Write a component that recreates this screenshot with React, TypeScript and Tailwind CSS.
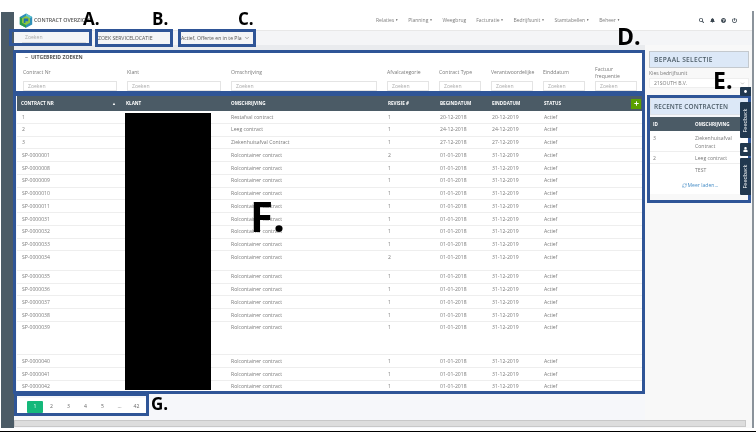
import React from "react";
import { ChevronDown, RefreshCw } from "lucide-react";
import { FaSearch, FaBell, FaQuestionCircle, FaPowerOff, FaPlus, FaMinus, FaUser, FaCircle } from "react-icons/fa";

type Row = { id: string; desc: string; rev: string; b: string; e: string; h?: string };
const sp = (id: string, rev = "1", h?: string): Row => ({ id: `SP-00000${id}`, desc: "Rolcontainer contract", rev, b: "01-01-2018", e: "31-12-2019", h });
const rows: Row[] = [
  { id: "1", desc: "Restafval contract", rev: "1", b: "20-12-2018", e: "20-12-2019" },
  { id: "2", desc: "Leeg contract", rev: "1", b: "24-12-2018", e: "24-12-2019" },
  { id: "3", desc: "Ziekenhuisafval Contract", rev: "1", b: "27-12-2018", e: "27-12-2019" },
  sp("01", "2"), sp("08"), sp("09"), sp("10"), sp("11"), sp("31"), sp("32"), sp("33"),
  sp("34", "2", "h-[19.5px]"), sp("35"), sp("36"), sp("37"), sp("38"),
  sp("39", "1", "h-[33.5px]"), sp("40"), sp("41"), sp("42"),
];
const filters = ["Contract Nr", "Klant", "Omschrijving", "Afvalcategorie", "Contract Type", "Verantwoordelijke", "Einddatum", "Factuur frequentie"];
const nav = [
  ["Relaties", true], ["Planning", true], ["Weegbrug", false], ["Facturatie", true],
  ["Bedrijfsunit", true], ["Stamtabellen", true], ["Beheer", true],
] as const;
const pages = ["2", "3", "4", "5", "...", "42"];
const cols = "grid grid-cols-[105px_105px_157px_52px_52px_52px_1fr]";

function Logo() {
  return (
    <svg viewBox="0 0 14 15" className="w-[14px] h-[15px]">
      <path d="M7 0.5 13.2 4v7.4L7 14.8.8 11.4V4Z" fill="#2f8fb8" />
      <path d="M7 .5 13.2 4 7 7.6Z" fill="#5cc3cf" />
      <path d="M.8 4 7 7.6v7.2L.8 11.4Z" fill="#2e9b4b" />
      <path d="M3 5.2 7 3l4 2.2v4.6L7 12 3 9.8Z" fill="#8dc63f" />
      <path d="M4.8 5.6h4.4v2.6H6.4V10H4.8Z" fill="#1f6fb0" />
    </svg>
  );
}

function Marker({ className }: { className: string }) {
  return <div className={`absolute border-[3px] border-[#2f5597] pointer-events-none ${className}`} />;
}
function Letter({ className, children }: { className: string; children: React.ReactNode }) {
  return <div className={`absolute font-bold text-black leading-none ${className}`}>{children}</div>;
}
function Tab({ className, children }: { className: string; children: React.ReactNode }) {
  return (
    <div className={`absolute left-[740px] w-[11px] bg-[#21384f] rounded-l-[1px] flex items-center justify-center text-white ${className}`}>
      {children}
    </div>
  );
}
function Vertical() {
  return <span className="-rotate-90 text-[5.4px] whitespace-nowrap">Feedback</span>;
}

export default function App() {
  return (
    <div className="relative w-[756px] h-[433px] bg-white overflow-hidden text-[5.1px] leading-[7px] text-[#7a7a7a] font-['Open_Sans',sans-serif] blur-[0.35px]">
      <div className="h-[11px]" />
      <div className="flex h-[417px]">
        <div className="w-[13px] ml-px mt-px bg-[#4b5b66]" />
        <div className="w-[738px] flex flex-col">
          <header className="h-[19px] grid grid-cols-[362px_auto_1fr] items-center">
            <div className="flex items-center pl-[5px] gap-[1px]">
              <Logo />
              <span className="font-semibold text-[#555] text-[5.3px] whitespace-nowrap">CONTRACT OVERZICHT</span>
            </div>
            <nav className="flex gap-[10px] text-[#7d7d7d] text-[5px]">
              {nav.map(([n, c]) => (
                <span key={n} className="flex items-center gap-[1px]">
                  {n}
                  {c && <span className="text-[3px] text-[#555]">▼</span>}
                </span>
              ))}
            </nav>
            <div className="flex items-center gap-[6px] pl-[79px] text-[#3a4650]">
              <FaSearch className="w-[5px] h-[5px]" />
              <FaBell className="w-[5px] h-[5px]" />
              <FaQuestionCircle className="w-[5px] h-[5px]" />
              <FaPowerOff className="w-[5px] h-[5px]" />
            </div>
          </header>
          <div className="h-[15px] bg-[#f4f5f7] border-t border-[#e8e8e8] flex items-center">
            <div className="ml-[8px] w-[64px] h-[10px] border-b border-[#dcdcdc] pl-[3px] flex items-center text-[#aaa]">Zoeken</div>
            <div className="ml-[12px] w-[78px] text-[#555] text-[5.2px]">ZOEK SERVICELOCATIE</div>
            <div className="ml-[5px] w-[70px] flex items-center gap-[2px] text-[#555] whitespace-nowrap">
              Actief, Offerte en in te Pla
              <ChevronDown className="w-[6px] h-[6px] shrink-0" />
            </div>
          </div>
          <div className="flex flex-1 min-h-0">
            <main className="w-[631px] bg-[#f6f7fa] flex flex-col">
              <div className="h-[6px] bg-[#e9ebee]" />
              <section className="h-[42px] bg-white pl-[9px] pt-[3px]">
                <div className="flex items-center gap-[3px] h-[7px] pl-[2px] font-bold text-[#555]">
                  <FaMinus className="w-[3px] h-[3px]" />
                  UITGEBREID ZOEKEN
                </div>
                <div className="grid grid-cols-[94px_94px_146px_42px_42px_42px_42px_42px] gap-x-[10px] mt-[7px]">
                  {filters.map((f) => (
                    <div key={f} className="relative h-[23px] flex flex-col">
                      <span className={f.startsWith("Factuur") ? "leading-[6.5px] -mt-[2px]" : "mt-[1px]"}>{f}</span>
                      <div className="absolute bottom-0 left-0 right-0 h-[10px] border border-[#e4e4e4] pl-[4px] flex items-center text-[#aaa]">Zoeken</div>
                    </div>
                  ))}
                </div>
              </section>
              <div className="h-[3px]" />
              <section className="relative ml-[3px] w-[625px] bg-white h-[297px]">
                <div className={`${cols} h-[15px] items-center bg-[#4b5b66] text-white font-bold text-[4.6px]`}>
                  <div className="pl-[4px] flex justify-between pr-[6px]">CONTRACT NR<span className="text-[4px]">▲</span></div>
                  <div className="pl-[4px]">KLANT</div>
                  <div className="pl-[4px]">OMSCHRIJVING</div>
                  <div className="pl-[4px]">REVISIE #</div>
                  <div className="pl-[4px]">BEGINDATUM</div>
                  <div className="pl-[4px]">EINDDATUM</div>
                  <div className="pl-[4px] flex justify-between pr-[1px] items-center">
                    STATUS
                    <span className="w-[10px] h-[10px] bg-[#5ba000] flex items-center justify-center"><FaPlus className="w-[5px] h-[5px] text-white" /></span>
                  </div>
                </div>
                {rows.map((r) => (
                  <div key={r.id} className={`${cols} ${r.h ?? "h-[12.75px]"} border-b border-[#eeeeee] pt-[2.5px]`}>
                    <div className="pl-[5px]">{r.id}</div>
                    <div />
                    <div className="pl-[4px]">{r.desc}</div>
                    <div className="pl-[4px]">{r.rev}</div>
                    <div className="pl-[4px]">{r.b}</div>
                    <div className="pl-[4px]">{r.e}</div>
                    <div className="pl-[4px]">Actief</div>
                  </div>
                ))}
                <div className="absolute left-[108px] top-[17px] w-[86px] h-[277px] bg-black" />
              </section>
              <div className="flex items-center h-[17px] mt-[5px] bg-white w-[134px] pl-[13px] text-[#666]">
                <span className="w-[16px] h-[12px] rounded-[1px] bg-[#14b87a] text-white flex items-center justify-center">1</span>
                {pages.map((p) => (
                  <span key={p} className="w-[17px] text-center">{p}</span>
                ))}
              </div>
            </main>
            <aside className="flex-1 bg-[#f8f8f8] pl-[4px] pr-[3px] pt-[6px]">
              <div className="h-[17px] bg-[#dce8f7] border border-[#c4c9ce] flex items-center pl-[4px] font-semibold text-[#4b5b66] text-[6.6px] tracking-[0.3px]">BEPAAL SELECTIE</div>
              <div className="mt-[2px]">Kies bedrijfsunit</div>
              <div className="mt-[1px] h-[10px] bg-white border border-[#eeeeee] flex items-center justify-between pl-[4px] pr-[3px]">
                21SOUTH B.V.
                <ChevronDown className="w-[5px] h-[5px]" />
              </div>
              <div className="mt-[10px] mr-[-1px] ml-[1px] bg-[#f6f7fa]">
                <div className="h-[17px] bg-[#dce8f7] border border-[#dfe3e8] flex items-center pl-[3px] font-semibold text-[#4b5b66] text-[6.4px] tracking-[0.15px] whitespace-nowrap">RECENTE CONTRACTEN</div>
                <div className="grid grid-cols-[45px_1fr] h-[14px] mt-[2px] items-center bg-[#4b5b66] text-white font-bold text-[4.6px]">
                  <span className="pl-[3px]">ID</span><span>OMSCHRIJVING</span>
                </div>
                <div className="grid grid-cols-[45px_1fr] bg-white h-[21px] border-b border-[#eeeeee] pt-[4px]">
                  <span className="pl-[3px]">3</span><span className="leading-[7.5px] w-[42px]">Ziekenhuisafval Contract</span>
                </div>
                <div className="grid grid-cols-[45px_1fr] bg-white h-[12px] border-b border-[#eeeeee] pt-[3px]">
                  <span className="pl-[3px]">2</span><span>Leeg contract</span>
                </div>
                <div className="grid grid-cols-[45px_1fr] bg-white h-[13px] pt-[3px]">
                  <span /><span>TEST</span>
                </div>
                <div className="h-[17px] bg-white flex items-center justify-center gap-[1px] text-[#4a90c8]">
                  <RefreshCw className="w-[5px] h-[5px]" />Meer laden...
                </div>
              </div>
            </aside>
          </div>
          <div className="h-[7px] mx-0 mt-[-8px] mb-[1px] w-[732px] bg-[#dddddd] border border-[#c8c8c8]" />
        </div>
        <div className="w-[2px] ml-[0px] bg-[#8b939b]" />
      </div>
      <div className="h-[3px]" />
      <div className="h-px bg-black" />

      <Marker className="left-[9px] top-[29px] w-[83px] h-[17px]" />
      <Marker className="left-[95px] top-[29px] w-[78px] h-[18px]" />
      <Marker className="left-[178px] top-[29px] w-[78px] h-[18px]" />
      <Marker className="left-[13px] top-[50px] w-[632px] h-[44px]" />
      <Marker className="left-[13px] top-[93px] w-[632px] h-[301px]" />
      <Marker className="left-[14px] top-[393px] w-[135px] h-[23px]" />
      <Marker className="left-[647px] top-[95px] w-[104px] h-[108px]" />

      <Tab className="top-[87px] h-[9px]"><FaCircle className="w-[3px] h-[3px]" /></Tab>
      <Tab className="top-[102px] h-[36px]"><Vertical /></Tab>
      <Tab className="top-[143px] h-[13px]"><FaUser className="w-[5px] h-[5px]" /></Tab>
      <Tab className="top-[158px] h-[37px]"><Vertical /></Tab>

      <Letter className="left-[83px] top-[10px] text-[17px]">A.</Letter>
      <Letter className="left-[152px] top-[10px] text-[17px]">B.</Letter>
      <Letter className="left-[238px] top-[10px] text-[17px]">C.</Letter>
      <Letter className="left-[617px] top-[25px] text-[23px]">D.</Letter>
      <Letter className="left-[713px] top-[69px] text-[23px]">E.</Letter>
      <Letter className="left-[250px] top-[195px] text-[42px]">F.</Letter>
      <Letter className="left-[151px] top-[395px] text-[17px]">G.</Letter>
    </div>
  );
}
